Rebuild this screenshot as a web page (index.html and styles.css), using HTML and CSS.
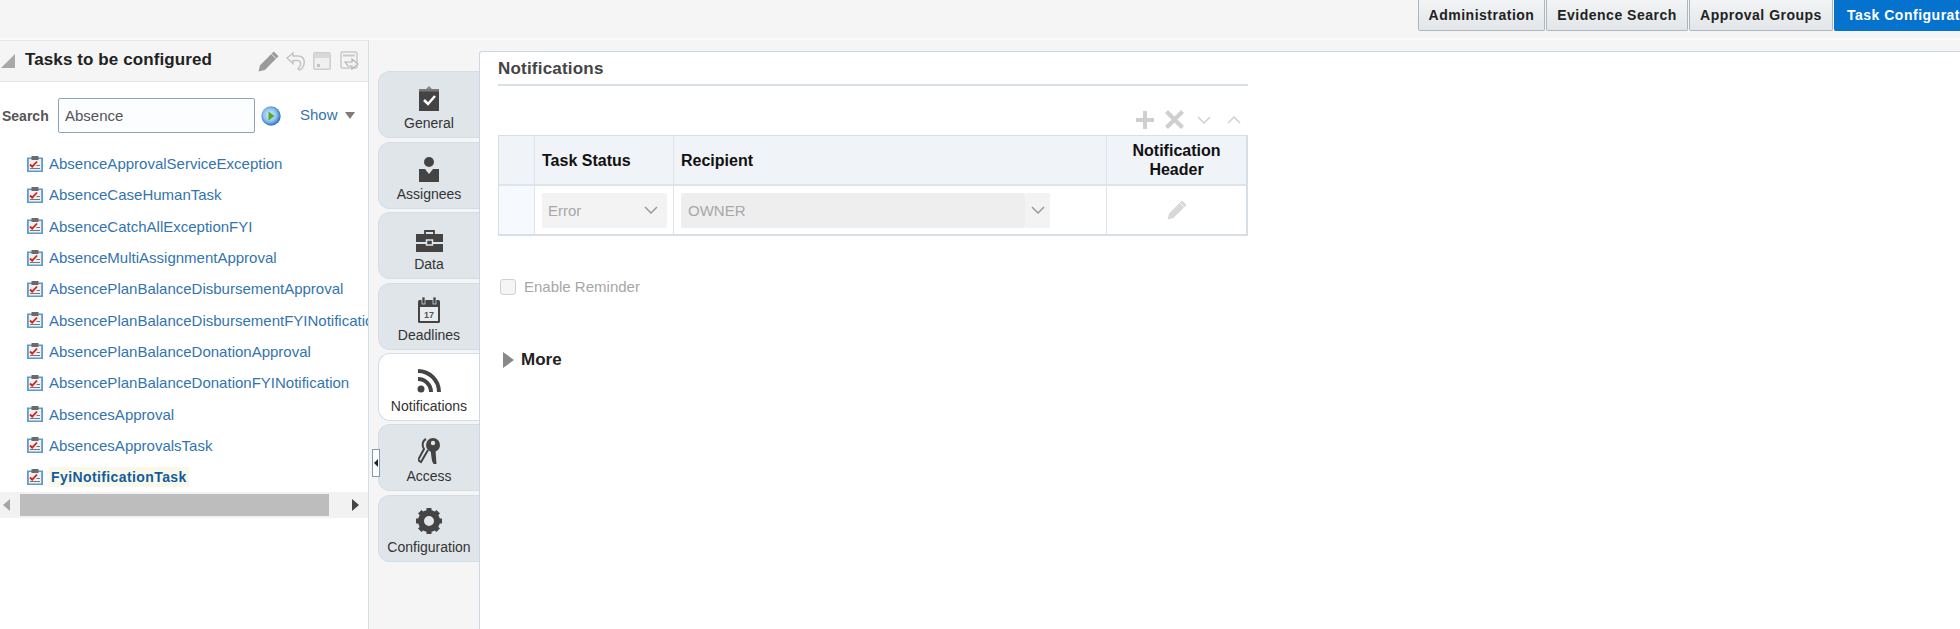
FILE: index.html
```html
<!DOCTYPE html>
<html lang="en">
<head>
<meta charset="utf-8">
<title>Task Configuration</title>
<link rel="stylesheet" href="styles.css">
</head>
<body>
<svg class="defs" width="0" height="0" aria-hidden="true">
  <defs>
    <radialGradient id="ball" cx="45%" cy="45%" r="55%">
      <stop offset="0" stop-color="#d8ecfa"/>
      <stop offset="0.6" stop-color="#8fc4ee"/>
      <stop offset="1" stop-color="#2b6fc0"/>
    </radialGradient>
    <symbol id="task" viewBox="0 0 16 16">
      <rect x="0" y="1.500" width="16" height="14.500" fill="#5b9ccd"/>
      <rect x="1.800" y="3" width="12.400" height="11.500" fill="#f0f0f0"/>
      <rect x="4.500" y="0" width="7" height="4" fill="#6a6a6a"/>
      <path d="M3 8.500l2.200 2.200L10 5.500" fill="none" stroke="#d32020" stroke-width="1.800"/>
      <path d="M9.500 9.500h3.500M3 12.500h10" stroke="#777" stroke-width="1"/>
    </symbol>
    <symbol id="pencil" viewBox="0 0 20 20">
      <path d="M15 .5l4.500 4.500L6.500 18 .5 19.500 2 13.500z" fill="currentColor"/>
      <path d="M12.800 2.800l4.400 4.400" stroke="#fff" stroke-width=".8"/>
    </symbol>
    <symbol id="chev" viewBox="0 0 14 8">
      <path d="M1 1l6 6 6-6" fill="none" stroke="currentColor" stroke-width="1.500"/>
    </symbol>
  </defs>
</svg>

<header class="topbar">
  <nav class="tabs">
    <a class="tab tab-admin">Administration</a>
    <a class="tab tab-evidence">Evidence Search</a>
    <a class="tab tab-approval">Approval Groups</a>
    <a class="tab tab-active">Task Configuration</a>
  </nav>
</header>

<main class="main">
  <aside class="left">
    <div class="left-head">
      <span class="collapse-tri"></span>
      <h2 class="left-title">Tasks to be configured</h2>
      <div class="left-tools">
        <svg class="ic-edit" width="21" height="21"><use href="#pencil"/></svg>
        <svg class="ic-tool" width="20" height="20" viewBox="0 0 20 20"><path d="M1 7l6-5v3h5c5 0 7 4 6 8-.6 2.500-2.200 5-4.500 6l-1.500-1.500c2-2 3.200-4 2.500-6-.5-1.500-1.800-2-3.500-2H7v3z" fill="#f5f5f5" stroke="#c4c4c4" stroke-width="1.500"/></svg>
        <svg class="ic-tool" width="18" height="18" viewBox="0 0 18 18"><rect x="0.800" y="0.800" width="16.400" height="16.400" rx="1.500" fill="#f0f0f0" stroke="#cdcdcd" stroke-width="1.500"/><rect x="1" y="1" width="16" height="5" fill="#d8d8d8"/><rect x="4" y="12" width="3" height="3" fill="#c4c4c4"/></svg>
        <svg class="ic-tool ic-last" width="20" height="20" viewBox="0 0 20 20"><rect x="1" y="1" width="16" height="16" rx="1.500" fill="none" stroke="#c9c9c9" stroke-width="1.500"/><path d="M3 4.500h12" stroke="#c9c9c9" stroke-width="2"/><path d="M5 11h7V8l6 5-6 5v-3H8z" fill="#f3f3f3" stroke="#b5b5b5" stroke-width="1.200"/></svg>
      </div>
    </div>
    <div class="search">
      <label class="search-label">Search</label>
      <div class="search-input">Absence</div>
      <svg class="go" width="20" height="20" viewBox="0 0 20 20"><circle cx="10" cy="10" r="9.700" fill="url(#ball)"/><path d="M7.500 5.500l6 4.500-6 4.500z" fill="#58a81e"/></svg>
      <a class="show">Show</a>
      <span class="show-tri"></span>
    </div>
    <ul class="tasks">
      <li class="task"><svg class="task-ic" width="16" height="16"><use href="#task"/></svg><a class="task-link">AbsenceApprovalServiceException</a></li>
      <li class="task"><svg class="task-ic" width="16" height="16"><use href="#task"/></svg><a class="task-link">AbsenceCaseHumanTask</a></li>
      <li class="task"><svg class="task-ic" width="16" height="16"><use href="#task"/></svg><a class="task-link">AbsenceCatchAllExceptionFYI</a></li>
      <li class="task"><svg class="task-ic" width="16" height="16"><use href="#task"/></svg><a class="task-link">AbsenceMultiAssignmentApproval</a></li>
      <li class="task"><svg class="task-ic" width="16" height="16"><use href="#task"/></svg><a class="task-link">AbsencePlanBalanceDisbursementApproval</a></li>
      <li class="task"><svg class="task-ic" width="16" height="16"><use href="#task"/></svg><a class="task-link">AbsencePlanBalanceDisbursementFYINotification</a></li>
      <li class="task"><svg class="task-ic" width="16" height="16"><use href="#task"/></svg><a class="task-link">AbsencePlanBalanceDonationApproval</a></li>
      <li class="task"><svg class="task-ic" width="16" height="16"><use href="#task"/></svg><a class="task-link">AbsencePlanBalanceDonationFYINotification</a></li>
      <li class="task"><svg class="task-ic" width="16" height="16"><use href="#task"/></svg><a class="task-link">AbsencesApproval</a></li>
      <li class="task"><svg class="task-ic" width="16" height="16"><use href="#task"/></svg><a class="task-link">AbsencesApprovalsTask</a></li>
      <li class="task"><svg class="task-ic" width="16" height="16"><use href="#task"/></svg><a class="task-link task-selected">FyiNotificationTask</a></li>
    </ul>
    <div class="hscroll">
      <span class="arrow-left"></span>
      <span class="thumb"></span>
      <span class="arrow-right"></span>
    </div>
  </aside>

  <div class="rail">
    <div class="splitter"><span class="splitter-tri"></span></div>
    <div class="vtab">
      <svg width="20" height="26" viewBox="0 0 20 26"><rect x="0" y="4" width="20" height="22" fill="#444"/><path d="M7 4l3-3 3 3z" fill="#888"/><rect x="0" y="4" width="20" height="2.500" fill="#777"/><path d="M5 15l4 4 7-8" fill="none" stroke="#fff" stroke-width="2.500"/></svg>
      <span class="vtab-label">General</span>
    </div>
    <div class="vtab">
      <svg width="20" height="25" viewBox="0 0 20 25"><circle cx="10" cy="5" r="5" fill="#444"/><path d="M0 12h6l4 5 4-5h6v13H0z" fill="#444"/></svg>
      <span class="vtab-label">Assignees</span>
    </div>
    <div class="vtab">
      <svg width="27" height="22" viewBox="0 0 27 22"><path d="M9 4V1h9v3" fill="none" stroke="#444" stroke-width="1.800"/><path d="M0 4h27v8H0zM0 14h27v8H0z" fill="#444"/><rect x="10.500" y="10" width="6" height="5" fill="#444" stroke="#e0e5ea" stroke-width="1.500"/></svg>
      <span class="vtab-label">Data</span>
    </div>
    <div class="vtab">
      <svg width="24" height="26" viewBox="0 0 24 26"><rect x="1" y="3" width="22" height="23" rx="1.500" fill="#444"/><rect x="3" y="10" width="18" height="14" fill="#e8ecef"/><rect x="5" y="0" width="3" height="7" fill="#444" stroke="#e0e5ea" stroke-width=".7"/><rect x="16" y="0" width="3" height="7" fill="#444" stroke="#e0e5ea" stroke-width=".7"/><text class="cal-num" x="12" y="21" text-anchor="middle">17</text></svg>
      <span class="vtab-label">Deadlines</span>
    </div>
    <div class="vtab vtab-active">
      <svg width="26" height="26" viewBox="0 0 26 26"><circle cx="5" cy="21" r="3.500" fill="#444"/><path d="M2 11a13 13 0 0 1 13 13" fill="none" stroke="#444" stroke-width="4"/><path d="M2 3a21 21 0 0 1 21 21" fill="none" stroke="#444" stroke-width="4"/></svg>
      <span class="vtab-label">Notifications</span>
    </div>
    <div class="vtab">
      <svg width="23" height="27" viewBox="0 0 23 27"><path d="M8 2C4 4 4 9 6 12L0 23l3 2 7-12" fill="none" stroke="#444" stroke-width="2"/><circle cx="15" cy="8" r="7" fill="#444"/><circle cx="15" cy="6" r="2.200" fill="#e0e5ea"/><path d="M12.500 13h5l1 14h-3l-1.500-3z" fill="#444"/></svg>
      <span class="vtab-label">Access</span>
    </div>
    <div class="vtab">
      <svg width="28" height="28" viewBox="0 0 28 28"><circle cx="14" cy="14" r="8" fill="none" stroke="#444" stroke-width="6"/><path d="M14 1v26M1 14h26M4.800 4.800l18.400 18.400M23.200 4.800L4.800 23.200" stroke="#444" stroke-width="5" stroke-dasharray="5 16"/></svg>
      <span class="vtab-label">Configuration</span>
    </div>
  </div>

  <section class="content">
    <div class="inner">
      <h2 class="section-title">Notifications</h2>
      <div class="toolbar">
        <svg class="tb-ic" width="18" height="18" viewBox="0 0 18 18"><path d="M7 0h4v7h7v4h-7v7H7v-7H0V7h7z" fill="#cfcfcf"/></svg>
        <svg class="tb-ic2" width="19" height="19" viewBox="0 0 19 19"><path d="M3 0l6.500 6.500L16 0l3 3-6.500 6.500L19 16l-3 3-6.500-6.500L3 19l-3-3 6.500-6.500L0 3z" fill="#cfcfcf"/></svg>
        <svg class="tb-chev" width="14" height="8"><use href="#chev"/></svg>
        <svg class="tb-chev tb-up" width="14" height="8"><use href="#chev"/></svg>
      </div>
      <div class="grid">
        <div class="cell head"></div>
        <div class="cell head head-text">Task Status</div>
        <div class="cell head head-text">Recipient</div>
        <div class="cell head head-center">Notification<br>Header</div>
        <div class="cell rowhead"></div>
        <div class="cell body"><div class="select"><span>Error</span><svg class="sel-chev" width="14" height="8"><use href="#chev"/></svg></div></div>
        <div class="cell body"><div class="combo"><span class="combo-text">OWNER</span><span class="combo-btn"><svg class="sel-chev" width="14" height="8"><use href="#chev"/></svg></span></div></div>
        <div class="cell body body-center"><svg class="ic-cell" width="20" height="20"><use href="#pencil"/></svg></div>
      </div>
      <div class="reminder"><span class="check"></span><span class="reminder-label">Enable Reminder</span></div>
      <div class="more"><span class="more-tri"></span><span class="more-label">More</span></div>
    </div>
  </section>
</main>
</body>
</html>
```

FILE: styles.css
```css
* { box-sizing: border-box; }
html, body { margin: 0; padding: 0; height: 100%; overflow: hidden; }
body {
  width: 1960px;
  height: 629px;
  background: #f5f5f5;
  font-family: "Liberation Sans", Arial, sans-serif;
  color: #333;
  display: flex;
  flex-direction: column;
}
.defs { position: absolute; }
ul { list-style: none; margin: 0; padding: 0; }
h2 { margin: 0; }

.topbar {
  height: 40px;
  flex: none;
  background: #f5f5f5;
  border-bottom: 2px solid #fafafa;
  overflow: hidden;
}
.tabs {
  display: flex;
  padding-left: 1418px;
  width: 2100px;
  gap: 1px;
}
.tab {
  height: 31px;
  flex: none;
  display: flex;
  align-items: center;
  justify-content: center;
  font-size: 14px;
  font-weight: 700;
  letter-spacing: .5px;
  color: #222;
  background: linear-gradient(#f2f4f5, #e2e6e9);
  border: 1px solid #aeb6bd;
  border-top: 0;
  border-radius: 0 0 2px 2px;
  white-space: nowrap;
}
.tab-admin { width: 127px; }
.tab-evidence { width: 142px; }
.tab-approval { width: 144px; }
.tab-active {
  width: 170px;
  background: #0572ce;
  border-color: #0572ce;
  color: #fff;
  justify-content: flex-start;
  padding-left: 12px;
}

.main {
  flex: 1;
  display: flex;
  min-height: 0;
}

.left {
  width: 369px;
  flex: none;
  background: #fff;
  border-right: 1px solid #d6dfe6;
  border-top: 1px solid #e3e9ee;
  overflow: hidden;
}
.left-head {
  height: 41px;
  background: #f5f5f5;
  border-bottom: 1px solid #dfe4e8;
  display: flex;
  align-items: center;
  padding-left: 1px;
}
.collapse-tri {
  width: 0;
  height: 0;
  border-style: solid;
  border-width: 0 0 14px 14px;
  border-color: transparent transparent #a8a8a8 transparent;
  margin-right: 10px;
}
.left-title {
  font-size: 17px;
  font-weight: 700;
  color: #222;
  flex: 1;
  letter-spacing: .1px;
  margin-top: -2px;
}
.left-tools {
  display: flex;
  align-items: center;
  gap: 7px;
  padding-right: 8px;
}
.ic-edit { color: #9a9a9a; }
.ic-last { margin-left: 2px; }

.search {
  display: flex;
  align-items: center;
  height: 35px;
  margin-top: 16px;
  padding-left: 2px;
}
.search-label {
  font-size: 14px;
  font-weight: 700;
  color: #555;
  width: 56px;
}
.search-input {
  width: 197px;
  height: 35px;
  border: 1px solid #8fa3b5;
  border-radius: 2px;
  background: #fbfdff;
  font-size: 15px;
  line-height: 33px;
  padding-left: 6px;
  color: #555;
}
.go { margin-left: 6px; }
.show {
  font-size: 15px;
  color: #3474ae;
  margin-left: 19px;
  margin-top: -2px;
}
.show-tri {
  width: 0;
  height: 0;
  border-style: solid;
  border-width: 7px 5.500px 0 5.500px;
  border-color: #7d7d7d transparent transparent transparent;
  margin-left: 7px;
}

.tasks { margin-top: 15px; }
.task {
  height: 31.300px;
  display: flex;
  align-items: center;
  padding-left: 27px;
  white-space: nowrap;
}
.task-ic { flex: none; margin-right: 6px; }
.task-link {
  font-size: 15px;
  color: #3474ae;
}
.task-selected {
  font-size: 14px;
  font-weight: 700;
  color: #145c9e;
  background: #f8f9ea;
  padding: 2px 2px;
  letter-spacing: .4px;
}

.hscroll {
  height: 26px;
  background: #f2f2f2;
  display: flex;
  align-items: center;
  padding: 0 8px 0 3px;
}
.arrow-left, .arrow-right {
  width: 0;
  height: 0;
  border-style: solid;
}
.arrow-left {
  border-width: 6px 7px 6px 0;
  border-color: transparent #a5a5a5 transparent transparent;
}
.thumb {
  width: 309px;
  height: 22px;
  background: #bdbdbd;
  margin-left: 10px;
}
.arrow-right {
  border-width: 6px 0 6px 7px;
  border-color: transparent transparent transparent #444;
  margin-left: 23px;
}

.rail {
  width: 110px;
  flex: none;
  position: relative;
  padding: 31px 0 0 9px;
  display: flex;
  flex-direction: column;
  gap: 3.300px;
}
.splitter {
  position: absolute;
  left: 3px;
  top: 409px;
  width: 8px;
  height: 28px;
  background: #fff;
  border: 1px solid #7f9ab5;
  display: flex;
  align-items: center;
  justify-content: center;
}
.splitter-tri {
  width: 0;
  height: 0;
  border-style: solid;
  border-width: 4px 4px 4px 0;
  border-color: transparent #222 transparent transparent;
}
.vtab {
  height: 67.300px;
  background: #e0e5ea;
  border: 1px solid #d3dde6;
  border-right: 0;
  border-radius: 12px 0 0 12px;
  display: flex;
  flex-direction: column;
  align-items: center;
  justify-content: flex-end;
  padding-bottom: 6px;
  gap: 5px;
}
.vtab-active { background: #fff; }
.vtab-label {
  font-size: 14px;
  line-height: 15px;
  color: #333;
  white-space: nowrap;
}
.cal-num {
  font-family: "Liberation Sans", Arial, sans-serif;
  font-size: 9px;
  font-weight: 700;
  fill: #555;
}

.content {
  flex: 1;
  background: #fff;
  margin-top: 11px;
  border-top: 1px solid #ccd8e3;
  border-left: 1px solid #ccd8e3;
  border-top-left-radius: 3px;
  padding-left: 18px;
  min-width: 0;
}
.inner { width: 750px; }
.section-title {
  font-size: 17px;
  font-weight: 700;
  color: #444;
  height: 34px;
  line-height: 34px;
  letter-spacing: .2px;
  border-bottom: 2px solid #d6dfe6;
}
.toolbar {
  height: 49px;
  display: flex;
  justify-content: flex-end;
  align-items: flex-end;
  padding-bottom: 6px;
}
.tb-ic { margin-right: 11px; }
.tb-ic2 { margin-right: 13px; }
.tb-chev { color: #d0d0d0; margin: 0 0 5px 0; }
.tb-up { transform: rotate(180deg); margin: 0 7px 5px 16px; }

.grid {
  display: grid;
  grid-template-columns: 36px 139px 433px 139px;
  grid-template-rows: 50px 48px;
  border: 1px solid #d6dfe6;
  border-width: 1px 2px 2px 1px;
  width: 750px;
}
.cell {
  border-right: 1px solid #dde4ea;
  display: flex;
  align-items: center;
}
.head {
  background: #f0f3f7;
  border-bottom: 2px solid #dde4ea;
  font-size: 16px;
  font-weight: 700;
  color: #111;
}
.head-text { padding-left: 7px; padding-top: 1px; }
.head-center {
  justify-content: center;
  text-align: center;
  line-height: 19px;
  border-right: 0;
}
.rowhead { background: #f6f9fd; }
.body { padding-left: 7px; }
.body-center { justify-content: center; padding: 0; border-right: 0; }
.select {
  width: 125px;
  height: 35px;
  background: #f3f3f3;
  border-radius: 2px;
  display: flex;
  align-items: center;
  justify-content: space-between;
  padding: 0 9px 0 6px;
  font-size: 15px;
  color: #a8a8a8;
}
.sel-chev { color: #9a9a9a; }
.combo {
  width: 369px;
  height: 35px;
  display: flex;
  font-size: 15px;
  color: #a8a8a8;
}
.combo-text {
  width: 344px;
  background: #eeeeef;
  border-radius: 2px;
  line-height: 36px;
  padding-left: 7px;
}
.combo-btn {
  width: 25px;
  background: #f3f3f3;
  border-radius: 2px;
  display: flex;
  align-items: center;
  justify-content: center;
}
.ic-cell { color: #d8d8d8; }

.reminder {
  display: flex;
  align-items: center;
  margin-top: 42px;
  padding-left: 2px;
  height: 17px;
}
.check {
  width: 16px;
  height: 16px;
  border: 1px solid #d0d0d0;
  border-radius: 3px;
  background: #f5f5f5;
}
.reminder-label {
  font-size: 15px;
  color: #a6a6a6;
  margin-left: 8px;
}
.more {
  display: flex;
  align-items: center;
  margin-top: 56px;
  padding-left: 5px;
  height: 18px;
}
.more-tri {
  width: 0;
  height: 0;
  border-style: solid;
  border-width: 8px 0 8px 11px;
  border-color: transparent transparent transparent #888;
}
.more-label {
  font-size: 17px;
  font-weight: 700;
  color: #222;
  margin-left: 7px;
}
```
